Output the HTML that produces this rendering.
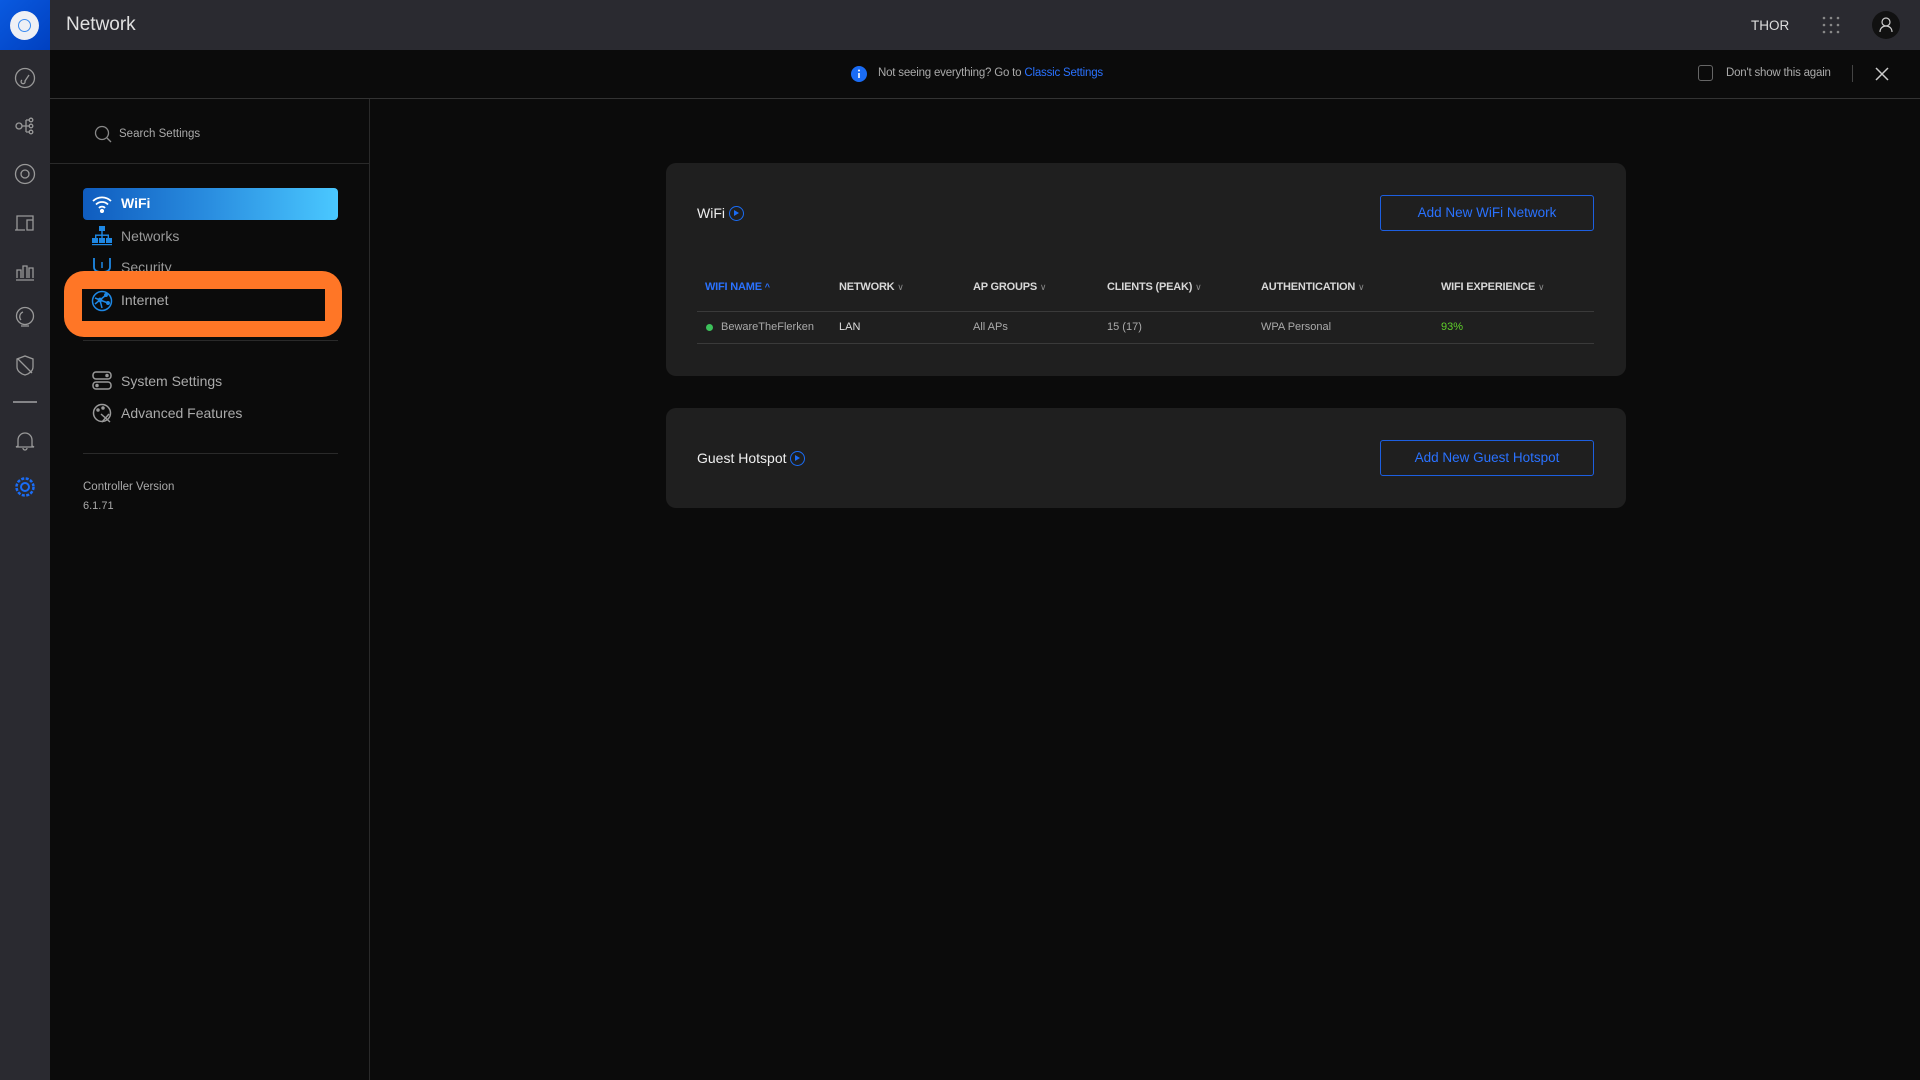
<!DOCTYPE html>
<html><head><meta charset="utf-8"><style>
*{margin:0;padding:0;box-sizing:border-box}
body{width:1920px;height:1080px;background:#0b0b0b;font-family:"Liberation Sans",sans-serif;position:relative;overflow:hidden;color:#ccc}
.a{position:absolute}
.top{left:0;top:0;width:1920px;height:50px;background:#2a2a30}
.rail{left:0;top:50px;width:50px;height:1030px;background:#2a2a30}
.logo{left:0;top:0;width:50px;height:50px;background:linear-gradient(135deg,#0a5ae0,#0040c0)}
.side{left:50px;top:99px;width:320px;height:981px;border-right:1px solid #2a2a2a}
.t{white-space:nowrap}
.card{background:#1f1f1f;border-radius:10px}
.btn{border:1px solid #1d5fe0;border-radius:3px;color:#2a72ff;font-size:13.5px;text-align:center;line-height:34px}
.th{font-size:11px;font-weight:bold;color:#d8d8d8;top:281px;letter-spacing:-0.2px}
.td{font-size:11px;color:#aaa;top:321px}
.chev{font-weight:normal;color:#888;font-size:9px}
</style></head><body>
<div class="a top"></div>
<div class="a logo"><div class="a" style="left:10px;top:11px;width:29px;height:29px;border-radius:50%;background:#eef0f5"></div><div class="a" style="left:18px;top:19px;width:13px;height:13px;border-radius:50%;border:1.5px solid #3a8bf0"></div></div>
<div class="a t" style="left:66px;top:14px;font-size:19px;color:#e0e0e0">Network</div>
<div class="a t" style="left:1751px;top:18px;font-size:13.5px;color:#ddd">THOR</div>
<svg class="a" style="left:1822px;top:16px" width="18" height="18"><g fill="#888"><circle cx="2" cy="2" r="1.3"/><circle cx="9" cy="2" r="1.3"/><circle cx="16" cy="2" r="1.3"/><circle cx="2" cy="9" r="1.3"/><circle cx="9" cy="9" r="1.3"/><circle cx="16" cy="9" r="1.3"/><circle cx="2" cy="16" r="1.3"/><circle cx="9" cy="16" r="1.3"/><circle cx="16" cy="16" r="1.3"/></g></svg>
<svg class="a" style="left:1872px;top:11px" width="28" height="28"><circle cx="14" cy="14" r="14" fill="#111"/><circle cx="14" cy="11" r="4" fill="none" stroke="#ccc" stroke-width="1.2"/><path d="M8 21c0-4 3-6 6-6s6 2 6 6" fill="none" stroke="#ccc" stroke-width="1.2"/></svg>
<div class="a rail"></div>
<svg class="a" style="left:0;top:50px" width="50" height="460" fill="none" stroke="#999" stroke-width="1.3">
<circle cx="25" cy="28" r="9.5"/><path d="M22 30a2 2 0 1 0 3 1l4-6"/>
<circle cx="19" cy="76" r="3"/><path d="M22 76h4M26 70v12M26 70h3M26 82h3M26 76h3"/><circle cx="31" cy="70" r="1.8"/><circle cx="31" cy="76" r="1.8"/><circle cx="31" cy="82" r="1.8"/>
<circle cx="25" cy="124" r="9.5"/><circle cx="25" cy="124" r="4"/>
<path d="M17 180v-14h16v14M15 180h10M27 170h6v10h-6z"/>
<path d="M16 230h18M17 228v-8h4v8M23 228v-12h4v12M29 228v-10h4v10"/>
<circle cx="25" cy="266" r="8.5"/><path d="M21 270a5 5 0 0 1 2-8M21 276h8"/>
<path d="M17 309l8-3 8 3v8c0 4-4 7-8 8-4-1-8-4-8-8zM18 309l14 14"/>
<path d="M13 352h24" stroke="#bbb"/>
<path d="M18 396v-6a7 7 0 0 1 14 0v6l2 1H16zM23 398a2 2 0 0 0 4 0"/>
<circle cx="25" cy="437" r="4" stroke="#1a6cf5" stroke-width="2"/><circle cx="25" cy="437" r="8.5" stroke="#1a6cf5" stroke-width="2.5" stroke-dasharray="3 1.5"/>
</svg>
<div class="a" style="left:50px;top:98px;width:1870px;height:1px;background:#333"></div>
<svg class="a" style="left:851px;top:66px" width="16" height="16"><circle cx="8" cy="8" r="8" fill="#1a6cf5"/><rect x="7.2" y="7" width="1.6" height="5" fill="#fff"/><circle cx="8" cy="4.5" r="1" fill="#fff"/></svg>
<div class="a t" style="left:878px;top:67px;font-size:11.5px;color:#aaa;letter-spacing:-0.2px">Not seeing everything? Go to <span style="color:#2a72ff">Classic Settings</span></div>
<div class="a" style="left:1698px;top:65px;width:15px;height:16px;border:1px solid #666;border-radius:3px"></div>
<div class="a t" style="left:1726px;top:67px;font-size:11.5px;color:#aaa;letter-spacing:-0.2px">Don't show this again</div>
<div class="a" style="left:1852px;top:65px;width:1px;height:17px;background:#444"></div>
<svg class="a" style="left:1875px;top:67px" width="14" height="14" stroke="#ccc" stroke-width="1.5"><path d="M1 1l12 12M13 1L1 13"/></svg>
<div class="a side"></div>
<div class="a" style="left:50px;top:163px;width:320px;height:1px;background:#2a2a2a"></div>
<svg class="a" style="left:94px;top:125px" width="18" height="18" fill="none" stroke="#888" stroke-width="1.3"><circle cx="8" cy="8" r="6.5"/><path d="M13 13l4 4"/></svg>
<div class="a t" style="left:119px;top:128px;font-size:11.5px;color:#aaa">Search Settings</div>
<div class="a" style="left:83px;top:188px;width:255px;height:32px;border-radius:4px;background:linear-gradient(90deg,#0f5cbf,#2a8ee0 50%,#4ac8ff)"></div>
<svg class="a" style="left:91px;top:195px" width="22" height="18" fill="none" stroke="#fff" stroke-width="1.8"><path d="M2 6a13 13 0 0 1 18 0M5 9.5a8.5 8.5 0 0 1 12 0M8 13a4 4 0 0 1 6 0"/><circle cx="11" cy="16" r="1.2" fill="#fff"/></svg>
<div class="a t" style="left:121px;top:195px;font-size:14px;color:#fff;font-weight:bold">WiFi</div>
<svg class="a" style="left:92px;top:226px" width="20" height="20" fill="#1e88e5"><rect x="7" y="0" width="6" height="5"/><rect x="9.3" y="5" width="1.4" height="4"/><rect x="3" y="8.5" width="14" height="1.4"/><rect x="3" y="8.5" width="1.4" height="4"/><rect x="15.6" y="8.5" width="1.4" height="4"/><rect x="9.3" y="8.5" width="1.4" height="4"/><rect x="0" y="12" width="6" height="5"/><rect x="7" y="12" width="6" height="5"/><rect x="14" y="12" width="6" height="5"/><rect x="0" y="18" width="20" height="1.2"/></svg>
<div class="a t" style="left:121px;top:228px;font-size:14px;color:#999">Networks</div>
<svg class="a" style="left:92px;top:257px" width="20" height="16" fill="none" stroke="#1e88e5" stroke-width="1.8"><path d="M2 1v9c0 4 4 5 8 5s8-1 8-5V1"/><path d="M10 5v6" stroke-width="1.5"/></svg>
<div class="a t" style="left:121px;top:259px;font-size:14px;color:#999">Security</div>
<div class="a" style="left:64px;top:271px;width:278px;height:66px;border-radius:20px;background:#ff7626"></div>
<div class="a" style="left:82px;top:289px;width:243px;height:32px;background:#0b0b0b"></div>
<svg class="a" style="left:91px;top:290px" width="22" height="22" fill="none" stroke="#1e88e5" stroke-width="1.5"><circle cx="11" cy="11" r="9.5"/><path d="M4 8l5 2 6-5M9 10l2 8M9 10l8 3M4 14l5-4"/><circle cx="9" cy="10" r="1.6" fill="#1e88e5"/><circle cx="15" cy="5" r="1.2" fill="#1e88e5"/><circle cx="17" cy="13" r="1.2" fill="#1e88e5"/></svg>
<div class="a t" style="left:121px;top:292px;font-size:14px;color:#aaa">Internet</div>
<div class="a" style="left:83px;top:340px;width:255px;height:1px;background:#2a2a2a"></div>
<svg class="a" style="left:92px;top:371px" width="20" height="20" fill="none" stroke="#999" stroke-width="1.5"><rect x="1" y="1" width="18" height="7" rx="3"/><rect x="1" y="11" width="18" height="7" rx="3"/><circle cx="5" cy="14.5" r="1" fill="#999"/><circle cx="15" cy="4.5" r="1" fill="#999"/></svg>
<div class="a t" style="left:121px;top:373px;font-size:14px;color:#aaa">System Settings</div>
<svg class="a" style="left:92px;top:403px" width="20" height="20" fill="none" stroke="#999" stroke-width="1.5"><circle cx="10" cy="10" r="8.5"/><path d="M9 11l9 8M17 11l-7 8"/><circle cx="6" cy="7" r="1" fill="#999"/><circle cx="11" cy="5" r="1" fill="#999"/></svg>
<div class="a t" style="left:121px;top:405px;font-size:14px;color:#aaa">Advanced Features</div>
<div class="a" style="left:83px;top:453px;width:255px;height:1px;background:#2a2a2a"></div>
<div class="a t" style="left:83px;top:481px;font-size:11.5px;color:#aaa">Controller Version</div>
<div class="a t" style="left:83px;top:500px;font-size:11px;color:#aaa">6.1.71</div>

<div class="a card" style="left:666px;top:163px;width:960px;height:213px"></div>
<div class="a t" style="left:697px;top:205px;font-size:14px;color:#eee">WiFi <span style="display:inline-block;width:15px;height:15px;border:1.5px solid #1a6cf5;border-radius:50%;vertical-align:-3px;position:relative"><span style="position:absolute;left:4px;top:3px;border-left:5px solid #1a6cf5;border-top:3.5px solid transparent;border-bottom:3.5px solid transparent"></span></span></div>
<div class="a btn" style="left:1380px;top:195px;width:214px;height:36px">Add New WiFi Network</div>
<div class="a t th" style="left:705px;color:#2a72ff">WIFI NAME <span style="font-size:9px">^</span></div>
<div class="a t th" style="left:839px">NETWORK <span class="chev">∨</span></div>
<div class="a t th" style="left:973px">AP GROUPS <span class="chev">∨</span></div>
<div class="a t th" style="left:1107px">CLIENTS (PEAK) <span class="chev">∨</span></div>
<div class="a t th" style="left:1261px">AUTHENTICATION <span class="chev">∨</span></div>
<div class="a t th" style="left:1441px">WIFI EXPERIENCE <span class="chev">∨</span></div>
<div class="a" style="left:697px;top:311px;width:897px;height:1px;background:#3a3a3a"></div>
<div class="a" style="left:706px;top:324px;width:7px;height:7px;border-radius:50%;background:#3cc15a"></div>
<div class="a t td" style="left:721px">BewareTheFlerken</div>
<div class="a t td" style="left:839px;color:#ddd">LAN</div>
<div class="a t td" style="left:973px">All APs</div>
<div class="a t td" style="left:1107px">15 (17)</div>
<div class="a t td" style="left:1261px">WPA Personal</div>
<div class="a t td" style="left:1441px;color:#5fd12a">93%</div>
<div class="a" style="left:697px;top:343px;width:897px;height:1px;background:#3a3a3a"></div>

<div class="a card" style="left:666px;top:408px;width:960px;height:100px"></div>
<div class="a t" style="left:697px;top:450px;font-size:14px;color:#eee">Guest Hotspot <span style="display:inline-block;width:15px;height:15px;border:1.5px solid #1a6cf5;border-radius:50%;vertical-align:-3px;position:relative"><span style="position:absolute;left:4px;top:3px;border-left:5px solid #1a6cf5;border-top:3.5px solid transparent;border-bottom:3.5px solid transparent"></span></span></div>
<div class="a btn" style="left:1380px;top:440px;width:214px;height:36px">Add New Guest Hotspot</div>
</body></html>
